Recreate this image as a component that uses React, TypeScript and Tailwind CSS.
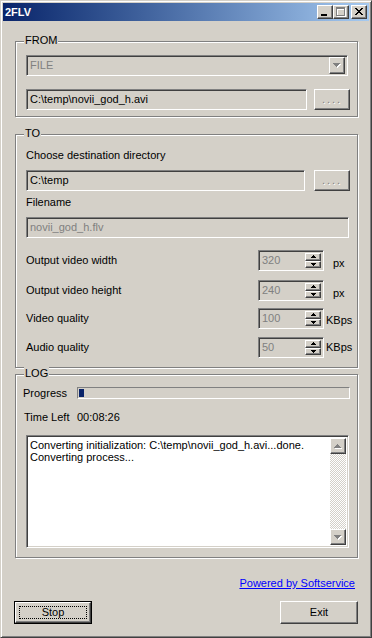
import React from "react";

const raised =
  "bg-[#d4d0c8] border border-t-white border-l-white border-r-[#404040] border-b-[#404040] shadow-[inset_-1px_-1px_0_#808080]";
const sunken =
  "border border-t-[#808080] border-l-[#808080] border-r-white border-b-white shadow-[inset_1px_1px_0_#404040,inset_-1px_-1px_0_#d4d0c8]";
const group =
  "relative border border-[#808080] shadow-[inset_1px_1px_0_#fff,1px_1px_0_#fff]";

function Legend({ children }: { children: React.ReactNode }) {
  return (
    <span className="absolute -top-[8px] left-[8px] px-[1px] bg-[#d4d0c8] leading-[13px]">
      {children}
    </span>
  );
}

const DOWN7 = "M0 0h7v1H0z M1 1h5v1H1z M2 2h3v1H2z M3 3h1v1H3z";
const UP7 = "M3 0h1v1H3z M2 1h3v1H2z M1 2h5v1H1z M0 3h7v1H0z";

function Arrow7({ d, disabled }: { d: string; disabled?: boolean }) {
  return (
    <svg width="8" height="5" viewBox="0 0 8 5" shapeRendering="crispEdges">
      {disabled && <path d={d} fill="#fff" transform="translate(1,1)" />}
      <path d={d} fill={disabled ? "#808080" : "#000"} />
    </svg>
  );
}

function SpinArrow({ up }: { up?: boolean }) {
  const d = up ? "M2 0h1v1H2z M1 1h3v1H1z M0 2h5v1H0z" : "M0 0h5v1H0z M1 1h3v1H1z M2 2h1v1H2z";
  return (
    <svg width="5" height="3" viewBox="0 0 5 3" shapeRendering="crispEdges">
      <path d={d} fill="#000" />
    </svg>
  );
}

function DotsButton() {
  return (
    <div className={`${raised} w-[36px] h-[21px] flex items-center justify-center`}>
      <span className="text-[#808080] tracking-[2px] leading-[13px] [text-shadow:1px_1px_0_#fff]">....</span>
    </div>
  );
}

function Spin({ value, unit, unitGap }: { value: string; unit: string; unitGap: string }) {
  return (
    <div className="flex items-center">
      <div className={`${sunken} w-[66px] h-[21px] bg-[#d4d0c8] flex p-[2px]`}>
        <div className="flex-1 text-[#808080] pl-[1px] leading-[15px]">{value}</div>
        <div className="w-[16px] flex flex-col">
          <div className={`${raised} h-[9px] flex items-center justify-center`}>
            <SpinArrow up />
          </div>
          <div className={`${raised} h-[8px] flex items-center justify-center`}>
            <SpinArrow />
          </div>
        </div>
      </div>
      <span className={`${unitGap} leading-[13px]`}>{unit}</span>
    </div>
  );
}

function Row({ label, children, mt }: { label: string; children: React.ReactNode; mt: string }) {
  return (
    <div className={`flex items-center h-[21px] ${mt}`}>
      <span className="w-[232px] leading-[13px]">{label}</span>
      {children}
    </div>
  );
}

export default function App() {
  return (
    <div className="w-[372px] h-[638px] bg-[#d4d0c8] border border-t-[#d4d0c8] border-l-[#d4d0c8] border-r-[#404040] border-b-[#404040] shadow-[inset_1px_1px_0_#fff,inset_-1px_-1px_0_#808080] p-[2px] flex flex-col text-[11px] text-black font-['Liberation_Sans',Arial,sans-serif] overflow-hidden">
      {/* Title bar */}
      <div className="h-[18px] flex items-center bg-gradient-to-r from-[#0a246a] to-[#a6caf0] pl-[2px] pr-[2px]">
        <span className="font-bold text-white text-[11px] leading-[13px]">2FLV</span>
        <div className="ml-auto flex">
          <div className={`${raised} w-[16px] h-[14px] relative`}>
            <svg className="absolute left-[3px] top-[8px]" width="6" height="2" shapeRendering="crispEdges">
              <rect x="0" y="0" width="6" height="2" fill="#000" />
            </svg>
          </div>
          <div className={`${raised} w-[16px] h-[14px] relative`}>
            <svg className="absolute left-[2px] top-[1px]" width="11" height="10" shapeRendering="crispEdges">
              <path d="M1 1h9v9H1z M2 3v6h7V3z" fill="#fff" fillRule="evenodd" />
              <path d="M0 0h9v9H0z M1 2v6h7V2z" fill="#808080" fillRule="evenodd" />
            </svg>
          </div>
          <div className={`${raised} w-[16px] h-[14px] ml-[2px] relative`}>
            <svg className="absolute left-[3px] top-[2px]" width="8" height="7" shapeRendering="crispEdges">
              <path
                d="M0 0h2v1H0z M6 0h2v1H6z M1 1h2v1H1z M5 1h2v1H5z M2 2h4v1H2z M3 3h2v1H3z M2 4h4v1H2z M1 5h2v1H1z M5 5h2v1H5z M0 6h2v1H0z M6 6h2v1H6z"
                fill="#000"
              />
            </svg>
          </div>
        </div>
      </div>

      {/* Content */}
      <div className="pl-[12px] pr-[11px] flex flex-col">
        {/* FROM */}
        <div className={`${group} mt-[20px] h-[76px] pt-[13px] pl-[10px]`}>
          <Legend>FROM</Legend>
          <div className={`${sunken} w-[322px] h-[21px] bg-[#d4d0c8] flex items-center p-[2px]`}>
            <span className="flex-1 pl-[1px] text-[#808080] leading-[13px]">FILE</span>
            <div className={`${raised} w-[16px] h-[17px] flex items-center justify-center`}>
              <Arrow7 d={DOWN7} disabled />
            </div>
          </div>
          <div className="flex mt-[13px] h-[21px]">
            <div className={`${sunken} w-[281px] h-[21px] bg-[#d4d0c8] flex items-center pl-[3px]`}>
              <span className="leading-[13px]">C:\temp\novii_god_h.avi</span>
            </div>
            <div className="ml-[7px]">
              <DotsButton />
            </div>
          </div>
        </div>

        {/* TO */}
        <div className={`${group} mt-[17px] h-[234px] pt-[14px] pl-[10px]`}>
          <Legend>TO</Legend>
          <div className="leading-[13px]">Choose destination directory</div>
          <div className="flex mt-[8px] h-[21px]">
            <div className={`${sunken} w-[279px] h-[21px] bg-[#d4d0c8] flex items-center pl-[3px]`}>
              <span className="leading-[13px]">C:\temp</span>
            </div>
            <div className="ml-[9px]">
              <DotsButton />
            </div>
          </div>
          <div className="leading-[13px] mt-[5px]">Filename</div>
          <div className={`${sunken} mt-[8px] w-[323px] h-[21px] bg-[#d4d0c8] flex items-center pl-[3px]`}>
            <span className="leading-[13px] text-[#808080]">novii_god_h.flv</span>
          </div>
          <Row label="Output video width" mt="mt-[12px]">
            <Spin value="320" unit="px" unitGap="ml-[9px] pt-[5px]" />
          </Row>
          <Row label="Output video height" mt="mt-[9px]">
            <Spin value="240" unit="px" unitGap="ml-[9px] pt-[5px]" />
          </Row>
          <Row label="Video quality" mt="mt-[7px]">
            <Spin value="100" unit="KBps" unitGap="ml-[2px] pt-[3px]" />
          </Row>
          <Row label="Audio quality" mt="mt-[8px]">
            <Spin value="50" unit="KBps" unitGap="ml-[2px]" />
          </Row>
        </div>

        {/* LOG */}
        <div className={`${group} mt-[6px] h-[184px] pt-[12px] pl-[7px]`}>
          <Legend>LOG</Legend>
          <div className="flex items-center h-[12px]">
            <span className="w-[54px] leading-[13px]">Progress</span>
            <div className="w-[273px] h-[12px] border border-t-[#808080] border-l-[#808080] border-r-white border-b-white p-[1px] flex">
              <div className="w-[5px] h-full bg-[#0a246a]" />
            </div>
          </div>
          <div className="flex mt-[12px] leading-[13px] pl-[1px]">
            <span className="w-[53px]">Time Left</span>
            <span>00:08:26</span>
          </div>
          <div className={`${sunken} mt-[11px] ml-[3px] w-[323px] h-[113px] bg-white flex p-[2px]`}>
            <div className="flex-1 pl-[1px] pt-[1px] leading-[12px]">
              <div>Converting initialization: C:\temp\novii_god_h.avi...done.</div>
              <div>Converting process...</div>
            </div>
            <div className="w-[16px] flex flex-col">
              <div className={`${raised} h-[16px] flex items-center justify-center`}>
                <Arrow7 d={UP7} disabled />
              </div>
              <div className="flex-1 bg-[repeating-conic-gradient(#d4d0c8_0_25%,#ffffff_0_50%)] bg-[length:2px_2px]" />
              <div className={`${raised} h-[16px] flex items-center justify-center`}>
                <Arrow7 d={DOWN7} disabled />
              </div>
            </div>
          </div>
        </div>

        {/* Link */}
        <div className="mt-[19px] self-end mr-[3px] leading-[13px] text-[#0000ff] underline">
          Powered by Softservice
        </div>

        {/* Buttons */}
        <div className="mt-[11px] flex justify-between">
          <div className="w-[78px] h-[23px] -ml-[1px] border border-black flex">
            <div className={`${raised} flex-1 p-[3px] flex`}>
              <div className="flex-1 border border-dotted border-black flex items-center justify-center leading-[13px]">
                Stop
              </div>
            </div>
          </div>
          <div className={`${raised} w-[78px] h-[23px] flex items-center justify-center leading-[13px]`}>
            Exit
          </div>
        </div>
      </div>
    </div>
  );
}
